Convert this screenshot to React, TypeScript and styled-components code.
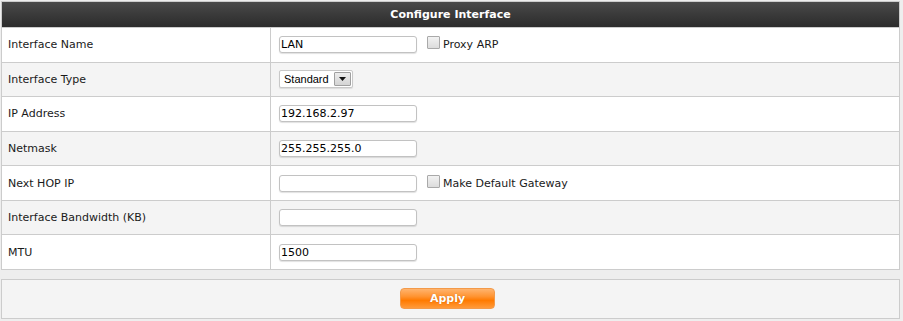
import React, { FC } from 'react';
import styled, { createGlobalStyle } from 'styled-components';

const GlobalStyle = createGlobalStyle`
  html, body {
    margin: 0;
    padding: 0;
    background: #eeeeee;
  }
  body {
    font-family: "DejaVu Sans", Verdana, sans-serif;
    font-size: 11px;
    color: #222;
  }
`

const Page = styled.div`
  width: 899px;
  padding: 1px 0 0 1px;
`

const FormTable = styled.div`
  border: 1px solid #cccccc;
  border-bottom: none;
  background: #fff;
`

const Header = styled.div`
  height: 25px;
  display: flex;
  align-items: center;
  justify-content: center;
  background: linear-gradient(to bottom, #4a4a4a 0%, #3a3a3a 50%, #2c2c2c 100%);
  color: #fff;
  font-weight: bold;
  border-bottom: 1px solid #cccccc;
`

const Row = styled.div<{ alt?: boolean }>`
  display: flex;
  height: 34.57px;
  box-sizing: border-box;
  border-bottom: 1px solid #cccccc;
  background: ${({ alt }) => (alt ? '#f4f4f4' : '#ffffff')};
`

const Label = styled.div`
  width: 269px;
  flex: none;
  display: flex;
  align-items: center;
  padding-left: 6px;
  box-sizing: border-box;
  border-right: 1px solid #cccccc;
  color: #1a1a1a;
`

const Value = styled.div`
  flex: 1;
  display: flex;
  align-items: center;
  padding-left: 8px;
`

const TextInput = styled.input`
  width: 138px;
  height: 17px;
  box-sizing: border-box;
  border: 1px solid #c2c2c2;
  border-radius: 3px;
  box-shadow: 0 1px 1px rgba(0, 0, 0, 0.12);
  padding: 0 1px;
  font-family: "DejaVu Sans", Verdana, sans-serif;
  font-size: 11px;
  color: #000;
  background: #fff;
  outline: none;
`

const Check = styled.input`
  appearance: none;
  width: 13px;
  height: 13px;
  margin: 0 3px 0 10px;
  box-sizing: border-box;
  border: 1px solid #a9a9a9;
  border-radius: 1px;
  background: linear-gradient(to bottom, #f2f2f2, #dcdcdc);
  position: relative;
  top: -2px;
`

const CheckText = styled.span`
  color: #1a1a1a;
`

const SelectBox = styled.div`
  display: flex;
  align-items: stretch;
  height: 18px;
  box-sizing: border-box;
  border: 1px solid #c8c8c8;
  border-radius: 2px;
  background: #fff;
  box-shadow: 0 1px 1px rgba(0, 0, 0, 0.1);
  font-family: "Liberation Sans", Arial, sans-serif;
  font-size: 11px;
  color: #000;
`

const SelectText = styled.span`
  display: flex;
  align-items: center;
  padding: 0 5px 0 4px;
`

const SelectArrow = styled.span`
  width: 15px;
  display: flex;
  align-items: center;
  justify-content: center;
  border: 1px solid #a0a0a0;
  border-radius: 1px;
  background: linear-gradient(to bottom, #ececec, #d4d4d4);
  margin: 1px 1px 1px 0;
`

const Footer = styled.div`
  margin-top: 9px;
  height: 40px;
  box-sizing: border-box;
  border: 1px solid #cccccc;
  background: #f4f4f4;
  display: flex;
  align-items: center;
  justify-content: center;
  padding-right: 6px;
`

const ApplyButton = styled.button`
  width: 95px;
  height: 21px;
  border: 1px solid #f39a4a;
  border-radius: 4px;
  background: linear-gradient(to bottom, #ffb46e 0%, #ff9330 40%, #ff7a00 60%, #ff9a3a 100%);
  color: #fff;
  font-family: "DejaVu Sans", Verdana, sans-serif;
  font-size: 11px;
  font-weight: bold;
  text-shadow: 0 0 1px rgba(150, 60, 0, 0.6);
  padding: 0;
  cursor: pointer;
`

interface Field {
  label: string;
  value?: string;
  check?: string;
  select?: string;
}

const fields: Field[] = [
  { label: 'Interface Name', value: 'LAN', check: 'Proxy ARP' },
  { label: 'Interface Type', select: 'Standard' },
  { label: 'IP Address', value: '192.168.2.97' },
  { label: 'Netmask', value: '255.255.255.0' },
  { label: 'Next HOP IP', value: '', check: 'Make Default Gateway' },
  { label: 'Interface Bandwidth (KB)', value: '' },
  { label: 'MTU', value: '1500' },
]

const App: FC = () => {
  return (
    <Page>
      <GlobalStyle />
      <FormTable>
        <Header>Configure Interface</Header>
        {fields.map((f, i) => (
          <Row key={f.label} alt={i % 2 === 1}>
            <Label>{f.label}</Label>
            <Value>
              {f.select ? (
                <SelectBox>
                  <SelectText>{f.select}</SelectText>
                  <SelectArrow>
                    <svg width="7" height="4" viewBox="0 0 7 4">
                      <path d="M0 0h7L3.5 4z" fill="#111" />
                    </svg>
                  </SelectArrow>
                </SelectBox>
              ) : (
                <TextInput type="text" defaultValue={f.value} />
              )}
              {f.check && (
                <>
                  <Check type="checkbox" />
                  <CheckText>{f.check}</CheckText>
                </>
              )}
            </Value>
          </Row>
        ))}
      </FormTable>
      <Footer>
        <ApplyButton>Apply</ApplyButton>
      </Footer>
    </Page>
  );
};

export default App;
